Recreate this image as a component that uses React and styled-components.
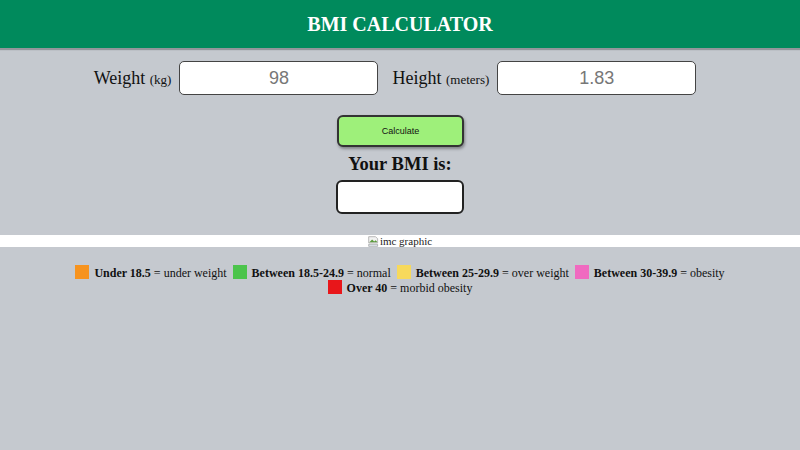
import React from "react"
import styled, { createGlobalStyle } from "styled-components"

const GlobalStyle = createGlobalStyle`
  html, body {
    margin: 0;
    padding: 0;
    background: #c5c9cf;
    font-family: "Liberation Serif", "Times New Roman", serif;
  }
`

const legend = [
  { color: "#f7931e", range: "Under 18.5", label: "under weight" },
  { color: "#4cc44c", range: "Between 18.5-24.9", label: "normal" },
  { color: "#f7d95c", range: "Between 25-29.9", label: "over weight" },
  { color: "#f06ac0", range: "Between 30-39.9", label: "obesity" },
  { color: "#e8161a", range: "Over 40", label: "morbid obesity" },
]

function BrokenImage() {
  return (
    <svg width="16" height="16" viewBox="0 0 16 16">
      <path d="M1 1h10l3 3v6H1z" fill="#f2f2f2" stroke="#9a9a9a" />
      <path d="M2 9l4-4 3 3 2-2 2 2v1H2z" fill="#5b9a3c" />
      <path d="M1 12h13v3H1z" fill="#dfe8f0" stroke="#9a9a9a" />
    </svg>
  )
}

export default function App() {
  return (
    <Page>
      <GlobalStyle />
      <Header>
        <Title>BMI CALCULATOR</Title>
      </Header>
      <Form>
        <Field>
          <Label>
            Weight <Unit>(kg)</Unit>
          </Label>
          <Input defaultValue="98" />
        </Field>
        <Field>
          <Label>
            Height <Unit>(meters)</Unit>
          </Label>
          <Input defaultValue="1.83" />
        </Field>
      </Form>
      <Result>
        <CalcButton>Calculate</CalcButton>
        <ResultTitle>Your BMI is:</ResultTitle>
        <Output />
      </Result>
      <Graphic>
        <BrokenImage />
        <span>imc graphic</span>
      </Graphic>
      <Legend>
        {legend.map((item) => (
          <LegendItem key={item.range}>
            <Swatch $color={item.color} />
            <b>{item.range}</b> = {item.label}
          </LegendItem>
        ))}
      </Legend>
    </Page>
  )
}

const Page = styled.div`
  min-height: 450px;
`

const Header = styled.header`
  height: 48px;
  background: #008a5c;
  display: flex;
  align-items: center;
  justify-content: center;
  box-shadow: 0 2px 1px rgba(0, 0, 0, 0.25);
`

const Title = styled.h1`
  margin: 0;
  color: #fff;
  font-size: 20px;
  font-weight: bold;
`

const Form = styled.div`
  display: flex;
  justify-content: center;
  gap: 14px;
  padding-top: 13px;
  padding-right: 10px;
`

const Field = styled.label`
  display: flex;
  align-items: center;
  gap: 8px;
`

const Label = styled.span`
  font-size: 18px;
  color: #111;
`

const Unit = styled.span`
  font-size: 13px;
`

const Input = styled.input`
  box-sizing: border-box;
  width: 199px;
  height: 34px;
  border: 1.5px solid #444;
  border-radius: 5px;
  background: #fff;
  text-align: center;
  font-family: "Liberation Sans", Arial, sans-serif;
  font-size: 18px;
  color: #777;
  outline: none;
`

const Result = styled.div`
  display: flex;
  flex-direction: column;
  align-items: center;
  padding-top: 20px;
`

const CalcButton = styled.button`
  box-sizing: border-box;
  width: 127px;
  height: 32px;
  margin-left: 1px;
  background: #9ef07a;
  border: 2px solid #333;
  border-radius: 6px;
  box-shadow: 1px 2px 3px rgba(0, 0, 0, 0.35);
  font-family: "Liberation Sans", Arial, sans-serif;
  font-size: 9px;
  color: #111;
`

const ResultTitle = styled.h2`
  margin: 5px 0 4px;
  font-size: 18.5px;
  line-height: 24px;
  font-weight: bold;
  color: #111;
`

const Output = styled.div`
  box-sizing: border-box;
  width: 128px;
  height: 34px;
  background: #fff;
  border: 2px solid #222;
  border-radius: 6px;
`

const Graphic = styled.div`
  margin-top: 21px;
  height: 12px;
  background: #fff;
  display: flex;
  align-items: center;
  justify-content: center;
  font-size: 11px;
  color: #222;
  line-height: 12px;

  svg {
    width: 11px;
    height: 11px;
    margin-right: 1px;
  }
`

const Legend = styled.div`
  padding: 18px 70px 0;
  text-align: center;
  font-size: 12px;
  line-height: 14px;
  color: #111;
`

const LegendItem = styled.span`
  margin: 0 3px;
`

const Swatch = styled.span`
  display: inline-block;
  width: 14px;
  height: 14px;
  margin-right: 5px;
  vertical-align: -2px;
  background: ${(p) => p.$color};
`
